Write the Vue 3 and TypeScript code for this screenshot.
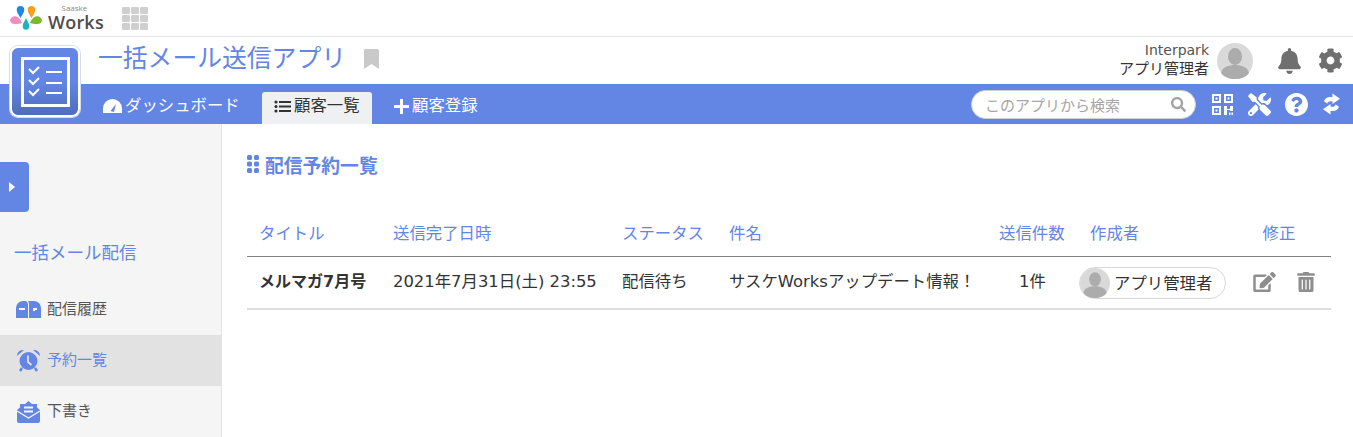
<script setup lang="ts">
const nav = [
  { label: '配信履歴', icon: 'box', active: false },
  { label: '予約一覧', icon: 'clock', active: true },
  { label: '下書き', icon: 'mail', active: false },
]
const columns = ['タイトル', '送信完了日時', 'ステータス', '件名', '送信件数', '作成者', '修正']
</script>

<template>
  <div class="page">
    <div class="topbar">
      <div class="logo">
        <svg class="drops" width="32" height="24" viewBox="0 0 32 24">
          <path fill="#1e88e5" d="M10.500 0a3.800 3.800 0 0 1 3.800 3.800c0 2.500-2 5-3.800 8.200-1.800-3.200-3.800-5.700-3.800-8.200A3.800 3.800 0 0 1 10.500 0z" />
          <path fill="#f5a020" d="M21.500 0a3.800 3.800 0 0 1 3.800 3.800c0 2.500-2 5-3.800 8.200-1.800-3.200-3.800-5.700-3.800-8.200A3.800 3.800 0 0 1 21.500 0z" />
          <path fill="#f28bc4" d="M0 14c1-3 4-4.500 6.500-3.500 2 .8 4 3 5.500 6.500-4 1.200-7 1.300-9 .7C1 17.200 0 15.800 0 14z" />
          <path fill="#7ab929" d="M32 14c-1-3-4-4.500-6.500-3.500-2 .8-4 3-5.500 6.500 4 1.200 7 1.300 9 .7 2-.5 3-1.900 3-3.700z" />
          <path fill="#19b7b7" d="M16 12c1.200 3.400 3.300 5.300 3.300 8a3.300 3.800 0 0 1-6.600 0c0-2.700 2.100-4.600 3.300-8z" />
        </svg>
        <div class="wordmark">
          <span class="saaske">Saaske</span>
          <span class="works">Works</span>
        </div>
      </div>
      <div class="apps">
        <i v-for="n in 9" :key="n"></i>
      </div>
    </div>

    <header class="header">
      <h1 class="app-title">一括メール送信アプリ</h1>
      <svg class="bookmark" width="15" height="20" viewBox="0 0 15 20"><path d="M1.500 0h12A1.500 1.500 0 0 1 15 1.500V20l-7.500-5L0 20V1.500A1.500 1.500 0 0 1 1.500 0z" fill="#c9c9c9" /></svg>
      <div class="user">
        <div class="user-names">
          <span class="company">Interpark</span>
          <span class="user-name">アプリ管理者</span>
        </div>
        <svg class="avatar" width="36" height="36" viewBox="0 0 36 36">
          <circle cx="18" cy="18" r="18" fill="#d9d9d9" />
          <ellipse cx="18" cy="13.500" rx="7" ry="8.500" fill="#acacac" />
          <path d="M4 30c1-6 8-8 14-8s13 2 14 8c-3 4-8 6-14 6S7 34 4 30z" fill="#acacac" />
        </svg>
        <svg class="bell" width="23" height="26" viewBox="0 0 448 512"><path fill="#6f6f6f" d="M224 512c35.32 0 63.97-28.65 63.97-64H160.03c0 35.35 28.65 64 63.97 64zm215.39-149.71c-19.32-20.76-55.47-51.99-55.47-154.29 0-77.7-54.48-139.9-127.94-155.16V32c0-17.67-14.32-32-31.98-32s-31.98 14.33-31.98 32v20.84C118.56 68.1 64.08 130.3 64.08 208c0 102.3-36.15 133.53-55.47 154.29-6 6.45-8.66 14.16-8.61 21.71.11 16.4 12.98 32 32.1 32h383.8c19.12 0 32-15.6 32.1-32 .05-7.55-2.61-15.27-8.61-21.71z" /></svg>
        <svg class="cog" width="25" height="25" viewBox="0 0 512 512"><path fill="#6f6f6f" d="M487.4 315.7l-42.6-24.6c4.3-23.2 4.3-47 0-70.2l42.6-24.6c4.9-2.8 7.1-8.6 5.5-14-11.1-35.6-30-67.8-54.7-94.6-3.8-4.1-10-5.1-14.8-2.3L380.8 110c-17.9-15.4-38.5-27.3-60.8-35.1V25.8c0-5.6-3.9-10.5-9.4-11.7-36.7-8.2-74.3-7.8-109.2 0-5.5 1.2-9.4 6.1-9.4 11.7V75c-22.2 7.9-42.8 19.8-60.8 35.1L88.7 85.5c-4.9-2.8-11-1.9-14.8 2.3-24.7 26.7-43.6 58.9-54.7 94.6-1.7 5.4.6 11.2 5.5 14L67.3 221c-4.3 23.2-4.3 47 0 70.2l-42.6 24.6c-4.9 2.8-7.1 8.6-5.5 14 11.1 35.6 30 67.8 54.7 94.6 3.8 4.1 10 5.1 14.8 2.3l42.6-24.6c17.9 15.4 38.5 27.3 60.8 35.1v49.2c0 5.6 3.9 10.5 9.4 11.7 36.7 8.2 74.3 7.8 109.2 0 5.5-1.2 9.4-6.1 9.4-11.7v-49.2c22.2-7.9 42.8-19.8 60.8-35.1l42.6 24.6c4.9 2.8 11 1.9 14.8-2.3 24.7-26.7 43.6-58.9 54.7-94.6 1.5-5.5-.7-11.3-5.6-14.1zM256 336c-44.1 0-80-35.9-80-80s35.9-80 80-80 80 35.9 80 80-35.9 80-80 80z" /></svg>
      </div>
    </header>

    <div class="app-icon">
      <svg width="49" height="50" viewBox="0 0 49 50">
        <rect x="1.500" y="1.500" width="46" height="47" fill="none" stroke="#fff" stroke-width="3" />
        <g fill="none" stroke="#fff" stroke-width="2">
          <path d="M8 12l4 4 6-6M8 23l4 4 6-6M8 34l4 4 6-6" />
          <path d="M25 15h16M25 26h16M25 36h16" />
        </g>
      </svg>
    </div>

    <nav class="bluebar">
      <a class="tab tab-dash">
        <svg width="19" height="14" viewBox="0 0 19 14">
          <path d="M0 14v-4.500a9.500 9.500 0 0 1 19 0V14z" fill="#fff" />
          <path d="M7.500 12l5.500-7-2 8z" fill="#6386e5" />
        </svg>
        <span>ダッシュボード</span>
      </a>
      <a class="tab tab-active">
        <svg width="17" height="13" viewBox="0 0 17 13">
          <g fill="#333"><circle cx="2" cy="2" r="1.600" /><circle cx="2" cy="6.500" r="1.600" /><circle cx="2" cy="11" r="1.600" /><rect x="5" y="1" width="12" height="2" /><rect x="5" y="5.500" width="12" height="2" /><rect x="5" y="10" width="12" height="2" /></g>
        </svg>
        <span>顧客一覧</span>
      </a>
      <a class="tab tab-add">
        <svg width="15" height="15" viewBox="0 0 15 15"><path d="M6 0h3v6h6v3H9v6H6V9H0V6h6z" fill="#fff" /></svg>
        <span>顧客登録</span>
      </a>
      <div class="bar-right">
        <div class="search">
          <span>このアプリから検索</span>
          <svg width="15" height="15" viewBox="0 0 512 512"><path fill="#a3a3a3" d="M505 442.7L405.3 343c-4.5-4.5-10.6-7-17-7H372c27.6-35.3 44-79.7 44-128C416 93.1 322.9 0 208 0S0 93.1 0 208s93.1 208 208 208c48.3 0 92.7-16.4 128-44v16.3c0 6.4 2.5 12.5 7 17l99.7 99.7c9.4 9.4 24.6 9.4 33.900 0l28.3-28.3c9.4-9.4 9.4-24.6.1-34zM208 336c-70.7 0-128-57.2-128-128 0-70.7 57.2-128 128-128 70.7 0 128 57.200 128 128 0 70.7-57.2 128-128 128z" /></svg>
        </div>
        <svg class="qr" width="21" height="21" viewBox="0 0 21 21">
          <g fill="none" stroke="#fff" stroke-width="2">
            <rect x="1" y="1" width="7" height="7" /><rect x="13" y="1" width="7" height="7" /><rect x="1" y="13" width="7" height="7" />
          </g>
          <g fill="#fff">
            <rect x="3.500" y="3.500" width="2" height="2" /><rect x="15.500" y="3.500" width="2" height="2" /><rect x="3.500" y="15.500" width="2" height="2" />
            <path d="M12 12h3v3h3v-3h3v5h-3v-1h-3v5h-3z" /><rect x="17" y="18.500" width="1.500" height="2.500" /><rect x="19.500" y="18.500" width="1.500" height="2.500" />
          </g>
        </svg>
        <svg class="tools" width="23" height="23" viewBox="0 0 512 512"><path fill="#fff" d="M501.1 395.7L384 278.6c-23.1-23.1-57.6-27.6-85.4-13.9L192 158.1V96L64 0 0 64l96 128h62.1l106.6 106.6c-13.6 27.8-9.2 62.3 13.9 85.4l117.1 117.1c14.6 14.6 38.2 14.6 52.7 0l52.7-52.7c14.5-14.6 14.5-38.2 0-52.700zM331.7 225c28.3 0 54.9 11 74.9 31l19.4 19.4c15.8-6.9 30.8-16.5 43.8-29.5 37.1-37.1 49.7-89.3 37.9-136.7-2.2-9-13.5-12.1-20.1-5.5l-74.4 74.4-67.9-11.3L334 98.900l74.4-74.4c6.6-6.6 3.4-17.900-5.700-20.200-47.4-11.7-99.6.9-136.6 37.900-28.5 28.5-41.9 66.1-41.2 103.6l82.1 82.1c8.100-1.900 16.500-2.900 24.700-2.900zm-103.900 82l-56.7-56.7L18.700 402.800c-25 25-25 65.500 0 90.500s65.500 25 90.500 0l123.600-123.600c-7.600-19.900-9.900-41.600-5-62.700zM64 472c-13.200 0-24-10.800-24-24 0-13.300 10.700-24 24-24s24 10.700 24 24c0 13.200-10.700 24-24 24z" /></svg>
        <svg class="help" width="23" height="23" viewBox="8 8 496 496"><path fill="#fff" d="M504 256c0 136.997-111.043 248-248 248S8 392.997 8 256C8 119.083 119.043 8 256 8s248 111.083 248 248zM262.655 90c-54.497 0-89.255 22.957-116.549 63.758-3.536 5.286-2.353 12.415 2.715 16.258l34.699 26.31c5.205 3.947 12.621 3.008 16.665-2.122 17.864-22.658 30.113-35.797 57.303-35.797 20.429 0 45.698 13.148 45.698 32.958 0 14.976-12.363 22.667-32.534 33.976C247.128 238.528 216 254.941 216 296v4c0 6.627 5.373 12 12 12h56c6.627 0 12-5.373 12-12v-1.333c0-28.462 83.186-29.647 83.186-106.667 0-58.002-60.165-102-116.531-102zM256 338c-25.365 0-46 20.635-46 46 0 25.364 20.635 46 46 46s46-20.636 46-46c0-25.365-20.635-46-46-46z" /></svg>
        <svg class="sync" width="17" height="22" viewBox="0 0 18 22">
          <path fill="#fff" d="M10 0l8 5.500-8 5.500V8H8C6.500 8 5.300 8.800 4.500 10.500L1 8C2 5 4.500 3.500 7.500 3.500H10z" />
          <path fill="#fff" d="M8 22L0 16.500 8 11v3h2c1.500 0 2.700-.8 3.500-2.500L17 14c-1 3-3.500 4.500-6.500 4.500H8z" />
        </svg>
      </div>
    </nav>

    <div class="body">
      <aside class="sidebar">
        <button class="toggle" type="button">
          <svg width="6" height="10" viewBox="0 0 6 10"><path d="M0 0l6 5-6 5z" fill="#fff" /></svg>
        </button>
        <div class="side-title">一括メール配信</div>
        <ul class="side-list">
          <li v-for="item in nav" :key="item.label" class="side-item" :class="{ active: item.active }">
            <span class="side-icon">
              <svg v-if="item.icon === 'box'" width="25" height="17" viewBox="0 0 25 17">
                <path fill="#6386e5" d="M0 17V7a7 7 0 0 1 7-7h3a5 5 0 0 1 2 3v14zM13 17V3a5 5 0 0 0-1-3h6a7 7 0 0 1 7 7v10z" />
                <rect x="3" y="7" width="6" height="2" fill="#fff" />
                <path d="M17 7h4v2h-2v1h-2z" fill="#fff" />
              </svg>
              <svg v-else-if="item.icon === 'clock'" width="23" height="23" viewBox="0 0 23 23">
                <circle cx="11.500" cy="12" r="9" fill="#6386e5" />
                <path d="M0 7a6 6 0 0 1 7-6zM23 7a6 6 0 0 0-7-6z" fill="#6386e5" />
                <path d="M5 19l-2 3M18 19l2 3" stroke="#6386e5" stroke-width="2.500" />
                <path d="M11 6.500V13l3.500 3" fill="none" stroke="#e2e2e2" stroke-width="1.800" />
              </svg>
              <svg v-else width="23" height="23" viewBox="0 0 23 23">
                <path fill="#6386e5" d="M0 10l3-2.500V4h5l3.500-3L15 4h5v3.500l3 2.500v11a2 2 0 0 1-2 2H2a2 2 0 0 1-2-2z" />
                <path d="M0 11l11.500 7L23 11" fill="none" stroke="#f5f5f5" stroke-width="1.300" />
                <rect x="7" y="6.500" width="9" height="2" fill="#f5f5f5" />
                <rect x="7" y="10.500" width="9" height="2" fill="#f5f5f5" />
              </svg>
            </span>
            <span>{{ item.label }}</span>
          </li>
        </ul>
      </aside>

      <main class="main">
        <h2 class="section-title">
          <svg width="12" height="18" viewBox="0 0 12 18">
            <g fill="#6386e5">
              <rect x="0" y="0" width="5" height="5" rx="1.500" /><rect x="7" y="0" width="5" height="5" rx="1.500" />
              <rect x="0" y="6.500" width="5" height="5" rx="1.500" /><rect x="7" y="6.500" width="5" height="5" rx="1.500" />
              <rect x="0" y="13" width="5" height="5" rx="1.500" /><rect x="7" y="13" width="5" height="5" rx="1.500" />
            </g>
          </svg>
          <span>配信予約一覧</span>
        </h2>

        <table class="table">
          <colgroup>
            <col style="width: 134px" /><col style="width: 229px" /><col style="width: 107px" /><col style="width: 270px" /><col style="width: 91px" /><col style="width: 149px" /><col style="width: 104px" />
          </colgroup>
          <thead>
            <tr>
              <th v-for="(c, i) in columns" :key="c" :class="{ center: i === 6 }">{{ c }}</th>
            </tr>
          </thead>
          <tbody>
            <tr>
              <td class="strong">メルマガ7月号</td>
              <td>2021年7月31日(土) 23:55</td>
              <td>配信待ち</td>
              <td>サスケWorksアップデート情報！</td>
              <td class="center">1件</td>
              <td class="chip-cell">
                <span class="chip">
                  <svg width="30" height="30" viewBox="0 0 36 36">
                    <circle cx="18" cy="18" r="18" fill="#d9d9d9" />
                    <ellipse cx="18" cy="13.500" rx="7" ry="8.500" fill="#acacac" />
                    <path d="M4 30c1-6 8-8 14-8s13 2 14 8c-3 4-8 6-14 6S7 34 4 30z" fill="#acacac" />
                  </svg>
                  <span>アプリ管理者</span>
                </span>
              </td>
              <td class="action-cell">
                <div class="actions">
                  <svg width="23" height="20" viewBox="0 0 576 512"><path fill="#8e8e8e" d="M402.600 83.200l90.200 90.200c3.800 3.800 3.800 10 0 13.800L274.400 405.600l-92.800 10.300c-12.400 1.400-22.900-9.100-21.500-21.500l10.300-92.800L388.800 83.200c3.800-3.800 10-3.800 13.800 0zm162-22.900l-48.800-48.800c-15.200-15.200-39.900-15.200-55.200 0l-35.400 35.400c-3.800 3.800-3.800 10 0 13.800l90.200 90.200c3.800 3.800 10 3.800 13.800 0l35.400-35.400c15.200-15.300 15.200-40 0-55.200zM384 346.200V448H64V128h229.800c3.200 0 6.200-1.300 8.500-3.500l40-40c7.600-7.600 2.200-20.500-8.500-20.500H48C21.500 64 0 85.500 0 112v352c0 26.500 21.500 48 48 48h352c26.500 0 48-21.500 48-48V306.200c0-10.700-12.900-16-20.500-8.500l-40 40c-2.200 2.300-3.500 5.300-3.500 8.500z" /></svg>
                  <svg width="18" height="20" viewBox="0 0 448 512"><path fill="#8e8e8e" d="M32 464a48 48 0 0 0 48 48h288a48 48 0 0 0 48-48V128H32zm272-256a16 16 0 0 1 32 0v224a16 16 0 0 1-32 0zm-96 0a16 16 0 0 1 32 0v224a16 16 0 0 1-32 0zm-96 0a16 16 0 0 1 32 0v224a16 16 0 0 1-32 0zM432 32H312l-9.400-18.700A24 24 0 0 0 281.100 0H166.800a23.720 23.720 0 0 0-21.400 13.300L136 32H16A16 16 0 0 0 0 48v32a16 16 0 0 0 16 16h416a16 16 0 0 0 16-16V48a16 16 0 0 0-16-16z" /></svg>
                </div>
              </td>
            </tr>
          </tbody>
        </table>
      </main>
    </div>
  </div>
</template>

<style>
html, body { margin: 0; background: #fff; }
</style>

<style scoped>
.page {
  position: relative;
  width: 1353px;
  height: 437px;
  overflow: hidden;
  font-family: "DejaVu Sans", "Noto Sans CJK JP", sans-serif;
  font-size: 16.400px;
  color: #333;
  background: #fff;
}
.topbar {
  display: flex;
  align-items: center;
  height: 36px;
  padding-left: 10px;
  border-bottom: 1px solid #e4e4e4;
}
.logo { display: flex; align-items: center; gap: 6px; width: 112px; }
.drops { flex: none; }
.wordmark { display: flex; flex-direction: column; align-items: center; color: #4d4d4d; font-family: "Open Sans", sans-serif; }
.saaske { font-size: 8px; line-height: 8px; height: 8px; margin: -2px 0 2px -3px; color: #888; }
.works { font-size: 18px; font-weight: 600; letter-spacing: .2px; line-height: 17px; }
.apps {
  display: grid;
  grid-template-columns: repeat(3, 8px);
  grid-auto-rows: 7px;
  gap: 1px;
  padding-top: 1px;
}
.apps i { background: #cfcfcf; border-radius: 1px; }
.header {
  display: flex;
  align-items: center;
  height: 47px;
  padding-left: 98px;
  padding-right: 10px;
}
.app-title { margin: 0 0 3px; font-size: 24.800px; font-weight: 400; line-height: 34px; color: #6386e5; }
.bookmark { margin-left: 18px; margin-bottom: 4px; }
.user { display: flex; align-items: center; margin-left: auto; }
.user-names { display: flex; flex-direction: column; align-items: flex-end; font-size: 15px; line-height: 20px; margin-right: 8px; margin-top: -1px; }
.company { color: #555; font-size: 14px; line-height: 18px; }
.avatar { margin-right: 25px; }
.cog { margin-left: 17px; }
.app-icon {
  position: absolute;
  left: 10px;
  top: 46px;
  box-sizing: border-box;
  width: 70px;
  height: 71px;
  display: flex;
  align-items: center;
  justify-content: center;
  background: linear-gradient(#6386e5 50%, #4f6dbd);
  border: 2px solid #fff;
  border-radius: 8px;
  box-shadow: 0 0 0 1px #d5dcf0;
  z-index: 2;
}
.bluebar {
  display: flex;
  align-items: flex-end;
  height: 40px;
  background: #6386e5;
  padding-left: 103px;
}
.tab {
  display: flex;
  align-items: center;
  height: 32px;
  color: #fff;
  white-space: nowrap;
  line-height: 1;
}
.tab span, .tab svg { position: relative; top: -2px; }
.tab-dash { gap: 3px; width: 159px; }
.tab-active {
  box-sizing: border-box;
  width: 110px;
  gap: 3px;
  padding-left: 12px;
  background: #eef0f1;
  color: #333;
  border-radius: 3px 3px 0 0;
}
.tab-add { margin-left: 22px; gap: 3px; }
.bar-right {
  display: flex;
  align-items: center;
  align-self: center;
  margin-left: auto;
  margin-right: 13px;
}
.search {
  box-sizing: border-box;
  display: flex;
  align-items: center;
  justify-content: space-between;
  width: 225px;
  height: 29px;
  padding: 0 9px 0 13px;
  background: #fff;
  border: 1px solid #d0d0d0;
  border-radius: 15px;
  color: #a5a5a5;
  font-size: 15px;
  margin-right: 16px;
}
.tools { margin-left: 15px; }
.help { margin-left: 14px; }
.sync { margin-left: 15px; }
.body { display: flex; height: 313px; }
.sidebar {
  box-sizing: border-box;
  width: 222px;
  flex: none;
  background: #f5f5f5;
  border-right: 1px solid #e4e4e4;
  padding-top: 38px;
}
.toggle {
  display: flex;
  align-items: center;
  justify-content: center;
  width: 29px;
  height: 50px;
  padding: 0 5px 0 0;
  background: #6386e5;
  border: 0;
  border-radius: 0 4px 4px 0;
}
.side-title {
  margin: 27px 0 0 14px;
  font-size: 17.500px;
  line-height: 28px;
  color: #6386e5;
}
.side-list { list-style: none; margin: 17px 0 0; padding: 0; }
.side-item {
  display: flex;
  align-items: center;
  height: 51px;
  font-size: 15px;
  color: #555;
}
.side-item > span:last-child { position: relative; top: -2px; }
.side-item.active { background: #e2e2e2; color: #6386e5; }
.side-icon { display: flex; justify-content: center; width: 25px; margin: 0 6px 0 16px; }
.main { flex: 1; padding: 30px 22px 0 25px; }
.section-title {
  display: flex;
  align-items: center;
  gap: 6px;
  margin: 0;
  height: 20px;
  font-size: 18.800px;
  font-weight: 700;
  color: #6386e5;
}
.table {
  width: 1084px;
  margin-top: 38px;
  table-layout: fixed;
  border-collapse: collapse;
}
th {
  height: 44px;
  padding: 0 0 4px 12px;
  box-sizing: border-box;
  text-align: left;
  font-weight: 400;
  color: #6386e5;
  border-bottom: 1px solid #808080;
  white-space: nowrap;
}
th.center { padding: 0 0 4px; text-align: center; }
td {
  height: 53px;
  padding: 0 0 5px 12px;
  box-sizing: border-box;
  color: #333;
  white-space: nowrap;
  border-bottom: 2px solid #dcdcdc;
}
td.strong { font-weight: 700; font-size: 16px; }
td.center { padding: 0 0 5px; text-align: center; }
td.chip-cell { padding: 1px 0 0 1px; }
td.action-cell { padding: 0; }
.chip {
  box-sizing: border-box;
  display: inline-flex;
  align-items: center;
  gap: 4px;
  width: 147px;
  height: 32px;
  border: 1px solid #d8d8d8;
  border-radius: 16px;
  vertical-align: middle;
}
.chip span { position: relative; top: -1px; }
.actions { display: flex; align-items: center; gap: 21px; padding-left: 26px; }
</style>
